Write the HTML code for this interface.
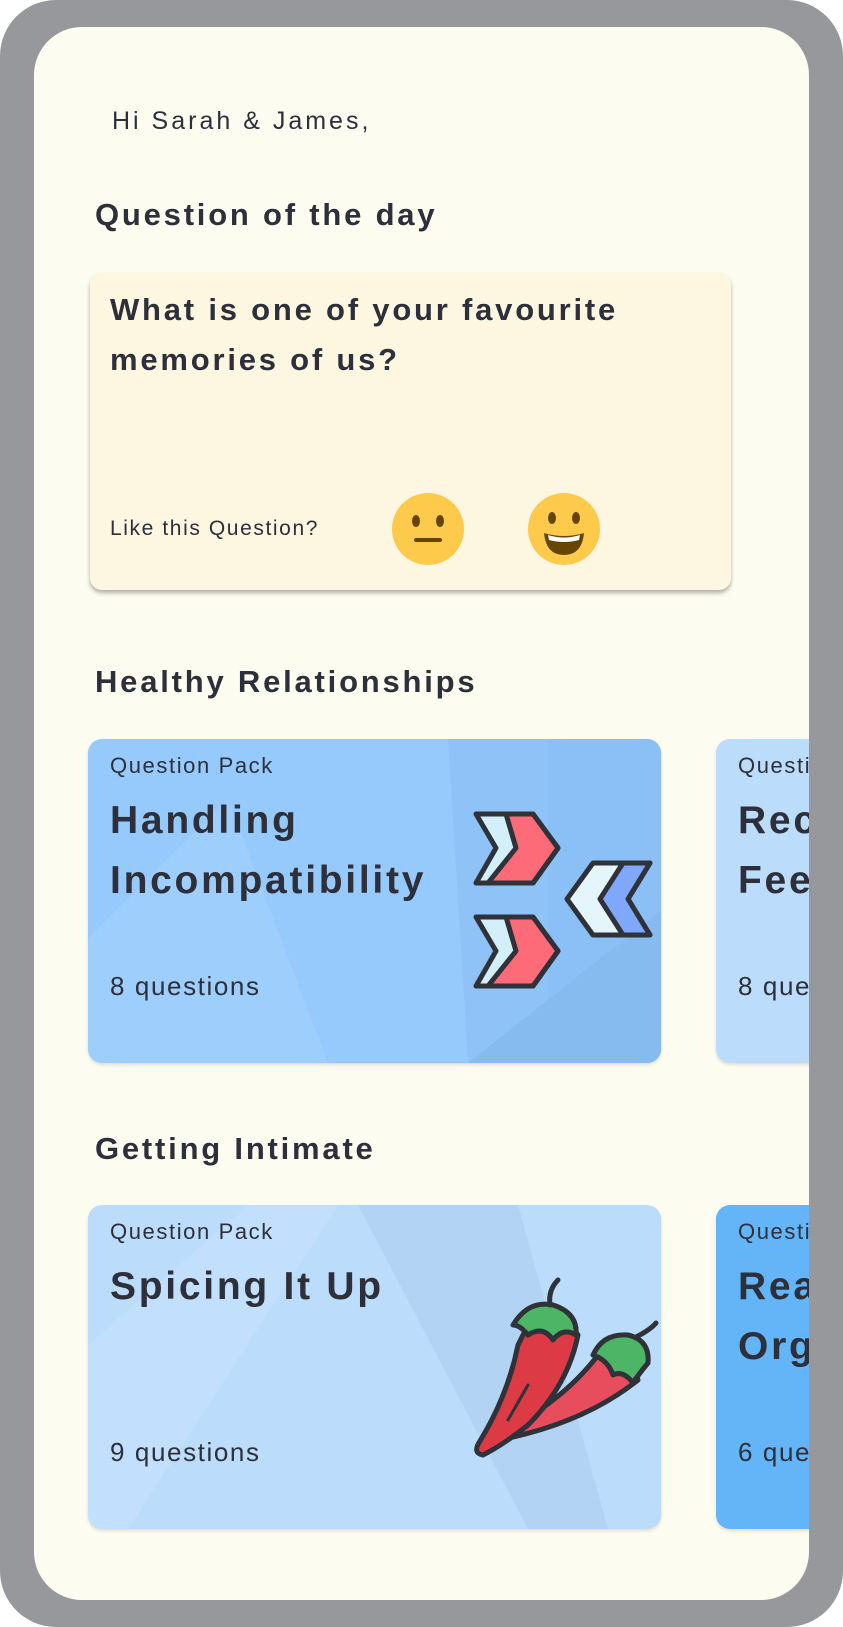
<!DOCTYPE html>
<html><head><meta charset="utf-8"><style>
*{margin:0;padding:0;box-sizing:border-box}
html{background:#fff}
body{width:843px;height:1627px;background:#97989c;position:relative;overflow:hidden;font-family:"Liberation Sans",sans-serif;color:#2d2f3a;border-radius:56px;letter-spacing:0.1em}
.screen{position:absolute;left:34px;top:27px;width:775px;height:1573px;background:#fdfcf0;border-radius:48px;overflow:hidden}
.t{position:absolute;white-space:nowrap}
.card{position:absolute;border-radius:14px;overflow:hidden;box-shadow:0 2px 3px rgba(0,0,0,.12)}
.qp{position:absolute;left:22px;top:14px;font-size:22px;white-space:nowrap}
.ti{position:absolute;left:22px;top:52px;font-size:39px;font-weight:bold;line-height:60px;white-space:nowrap;letter-spacing:0.07em}
.nq{position:absolute;left:22px;top:232px;font-size:26px;white-space:nowrap}
</style></head><body>
<div class="screen">
<div class="t" style="left:78px;top:80px;font-size:25px;letter-spacing:0.12em">Hi Sarah &amp; James,</div>
<div class="t" style="left:61px;top:170px;font-size:31px;font-weight:bold;letter-spacing:0.09em">Question of the day</div>
<div class="card" style="left:56px;top:246px;width:641px;height:317px;background:#fdf6e0;border-radius:12px;box-shadow:0 3px 4px rgba(0,0,0,.3)">
<div class="t" style="left:20px;top:12px;font-size:31px;font-weight:bold;line-height:50px;letter-spacing:0.09em">What is one of your favourite<br>memories of us?</div>
<div class="t" style="left:20px;top:244px;font-size:21px">Like this Question?</div>
<svg style="position:absolute;left:0;top:0" width="641" height="317">
<circle cx="338" cy="256" r="36" fill="#fdca4c"/>
<ellipse cx="326" cy="248" rx="4" ry="6" fill="#664500"/><ellipse cx="350" cy="248" rx="4" ry="6" fill="#664500"/>
<rect x="324" y="265" width="28" height="4" rx="2" fill="#664500"/>
<circle cx="474" cy="256" r="36" fill="#fdca4c"/>
<ellipse cx="462" cy="245" rx="4" ry="6" fill="#664500"/><ellipse cx="486" cy="245" rx="4" ry="6" fill="#664500"/>
<path d="M454 260 Q474 266 494 260 Q492 282 474 282 Q456 282 454 260Z" fill="#664500"/>
<path d="M458 262 Q474 267 490 262 L489 267 Q474 271 459 267Z" fill="#fff"/>
</svg>
</div>
<div class="t" style="left:61px;top:637px;font-size:31px;font-weight:bold;letter-spacing:0.09em">Healthy Relationships</div>
<div class="card" style="left:54px;top:712px;width:573px;height:324px;background:#97cafc">
<svg style="position:absolute;left:0;top:0" width="573" height="324">
<path d="M360 0 L573 0 L573 324 L380 324 Z" fill="#8fc3f7"/>
<path d="M0 200 L140 60 L240 324 L0 324Z" fill="#9dcefc"/>
<path d="M460 0 L573 0 L573 324 L460 324Z" fill="#8ac0f6"/>
<path d="M600 150 L573 324 L380 324Z" fill="#86bbf0"/>
<g stroke="#2f3238" stroke-width="5" stroke-linejoin="round" stroke-linecap="round">
<path d="M388 75 L445 75 L470 109 L445 144 L388 144 L408 109Z" fill="#d3eff9"/>
<path d="M418 75 L445 75 L470 109 L445 144 L400 144 L428 109Z" fill="#fd6b78"/>
<path d="M388 178 L445 178 L470 212 L445 247 L388 247 L408 212Z" fill="#d3eff9"/>
<path d="M418 178 L445 178 L470 212 L445 247 L400 247 L428 212Z" fill="#fd6b78"/>
<path d="M562 124 L505 124 L479 160 L505 196 L562 196 L540 160Z" fill="#e4f5fb"/>
<path d="M562 124 L535 124 L512 160 L535 196 L562 196 L540 160Z" fill="#7fa7fa"/>
</g></svg>
<div class="qp">Question Pack</div>
<div class="ti">Handling<br>Incompatibility</div>
<div class="nq">8 questions</div>
</div>
<div class="card" style="left:682px;top:712px;width:200px;height:324px;background:#bcdcfc">
<div class="qp">Question Pack</div><div class="ti">Recognising<br>Feelings</div><div class="nq">8 questions</div></div>
<div class="t" style="left:61px;top:1104px;font-size:31px;font-weight:bold;letter-spacing:0.09em">Getting Intimate</div>
<div class="card" style="left:54px;top:1178px;width:573px;height:324px;background:#bcdcfc">
<svg style="position:absolute;left:0;top:0" width="573" height="324">
<path d="M270 0 L430 0 L520 324 L440 324Z" fill="#b3d3f5"/>
<path d="M0 140 L160 0 L250 0 L40 324 L0 324Z" fill="#c2e0fd"/>
<g stroke="#2f3238" stroke-width="5" stroke-linejoin="round" stroke-linecap="round">
<path d="M510 150 Q545 155 550 175 Q500 215 425 232 Q413 232 425 222 Q480 190 510 150Z" fill="#e84d5e"/>
<path d="M440 120 Q478 110 490 130 Q480 180 440 220 Q415 240 395 250 Q384 248 392 236 Q420 190 430 140Z" fill="#dc3a45"/>
<path d="M425 120 Q440 95 465 100 Q490 108 488 130 Q475 122 465 135 Q455 120 440 130 Q432 120 425 120Z" fill="#4db566"/>
<path d="M462 100 Q460 85 470 75" fill="none"/>
<path d="M505 150 Q515 128 540 130 Q562 135 560 158 Q550 170 545 178 Q535 165 525 170 Q520 155 505 150Z" fill="#4db566"/>
<path d="M548 132 Q562 125 568 118" fill="none"/>
<path d="M440 180 L420 215" fill="none" stroke-width="3"/>
</g></svg>
<div class="qp">Question Pack</div>
<div class="ti">Spicing It Up</div>
<div class="nq">9 questions</div>
</div>
<div class="card" style="left:682px;top:1178px;width:200px;height:324px;background:#64b5f8">
<div class="qp">Question Pack</div><div class="ti">Reaching<br>Orgasm</div><div class="nq">6 questions</div></div>
</div>
</body></html>
